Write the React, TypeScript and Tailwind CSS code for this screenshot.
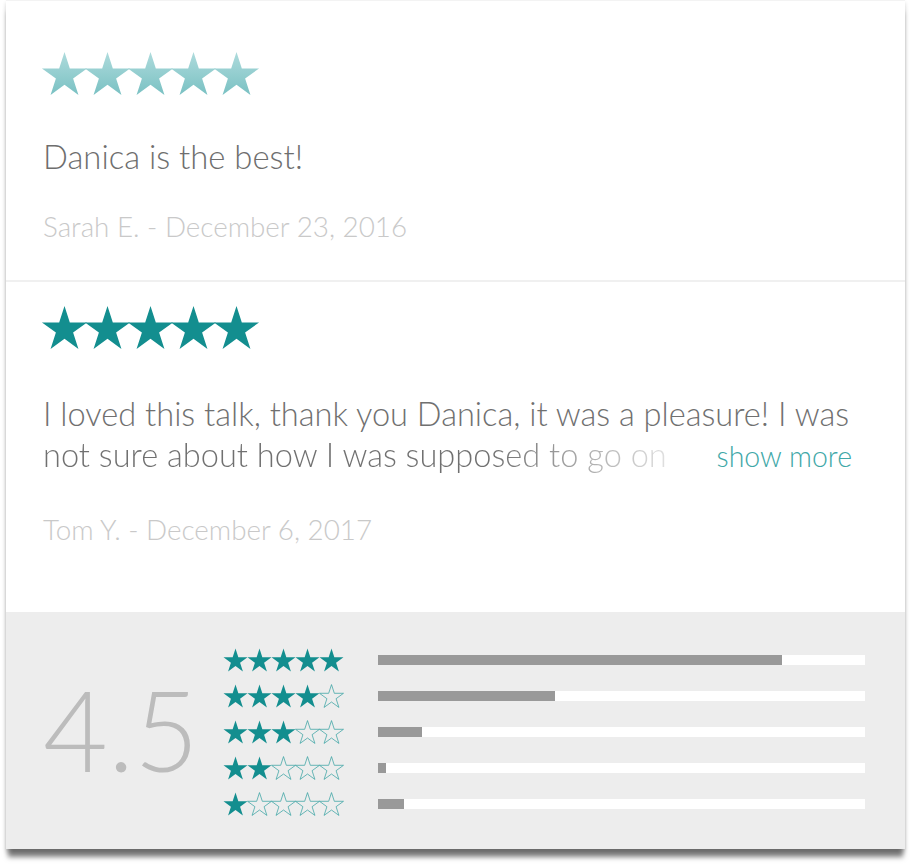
import React from "react";

const STAR = "95.1,0 117.55,69.1 190.2,69.1 131.4,111.8 153.9,180.9 95.1,138.2 36.3,180.9 58.8,111.8 0,69.1 72.65,69.1";

const Star = ({ kind, className }: { kind: "fade" | "solid" | "empty"; className: string }) => (
  <svg viewBox="-4 -4 198.2 188.9" className={className}>
    {kind === "fade" && (
      <defs>
        <linearGradient id="starFade" x1="0" y1="0" x2="0" y2="1">
          <stop offset="0" stopColor="#aedbdc" />
          <stop offset="1" stopColor="#7ac1c3" />
        </linearGradient>
      </defs>
    )}
    <polygon
      points={STAR}
      fill={kind === "fade" ? "url(#starFade)" : kind === "solid" ? "#138e8f" : "none"}
      stroke={kind === "empty" ? "#3aa3a4" : "none"}
      strokeWidth={kind === "empty" ? 6 : 0}
      strokeLinejoin="miter"
    />
  </svg>
);

const BigStars = ({ kind }: { kind: "fade" | "solid" }) => (
  <div className="flex -space-x-1">
    {[0, 1, 2, 3, 4].map((i) => (
      <Star key={i} kind={kind} className="w-[47px] h-[45px]" />
    ))}
  </div>
);

const rows = [
  { stars: 5, pct: 83 },
  { stars: 4, pct: 36.3 },
  { stars: 3, pct: 9 },
  { stars: 2, pct: 1.7 },
  { stars: 1, pct: 5.4 },
];

export default function App() {
  return (
    <div className="min-h-screen bg-white pl-[6px] pr-[7px] font-['Lato',sans-serif]">
      <div className="bg-white border-t border-[#f3f3f3] shadow-[0_10px_5px_-2px_rgba(0,0,0,0.5),0_3px_4px_rgba(0,0,0,0.18)]">
        {/* first review */}
        <section className="pl-[35px] pt-[50px] pb-[35px]">
          <BigStars kind="fade" />
          <p className="mt-[41px] pl-[2px] text-[32.8px] leading-[40px] font-light text-[#6e6e6e]">Danica is the best!</p>
          <p className="mt-[32px] pl-[2px] text-[27.8px] leading-[36px] font-light text-[#c9c9c9]">
            Sarah E. - December 23, 2016
          </p>
        </section>

        <div className="h-[2px] bg-[#f0f0f0]" />

        {/* second review */}
        <section className="pl-[35px] pr-[53px] pt-[23px] pb-[64px]">
          <BigStars kind="solid" />
          <div className="mt-[43px] pl-[2px] text-[32.6px] leading-[41px] font-light text-[#707070]">
            <div className="whitespace-nowrap">I loved this talk, thank you Danica, it was a pleasure! I was</div>
            <div className="flex items-baseline justify-between whitespace-nowrap">
              <span className="bg-[linear-gradient(to_right,#707070_0%,#707070_72%,#e0e0e0_100%)] bg-clip-text text-transparent">
                not sure about how I was supposed to go on
              </span>
              <button className="text-[28.5px] font-light text-[#3fa8a8]">show more</button>
            </div>
          </div>
          <p className="mt-[35px] pl-[2px] text-[27.8px] leading-[36px] font-light text-[#c9c9c9]">
            Tom Y. - December 6, 2017
          </p>
        </section>

        {/* summary */}
        <section className="flex items-center bg-[#ededed] pl-[37px] pr-[40px] pt-[30px] pb-[27px]">
          <div className="w-[180px] pb-[6px] text-[112px] leading-none font-light text-[#bcbcbc]">4.5</div>
          <div className="flex-1 flex flex-col">
            {rows.map((r) => (
              <div key={r.stars} className="h-[36px] flex items-center">
                <div className="flex -space-x-px w-[155px]">
                  {[0, 1, 2, 3, 4].map((i) => (
                    <Star key={i} kind={i < r.stars ? "solid" : "empty"} className="w-[25px] h-[24px]" />
                  ))}
                </div>
                <div className="flex-1 h-[10px] bg-white">
                  <div className="h-full bg-[#999999]" style={{ width: `${r.pct}%` }} />
                </div>
              </div>
            ))}
          </div>
        </section>
      </div>
    </div>
  );
}
